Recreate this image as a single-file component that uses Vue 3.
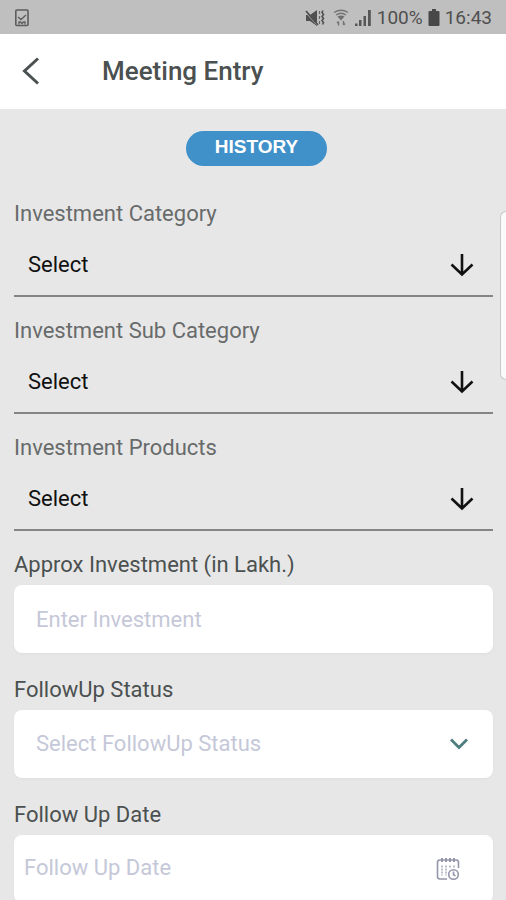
<script setup>
import { ref } from 'vue'

const pickers = ref([
  { id: 'category', label: 'Investment Category', value: '' },
  { id: 'sub-category', label: 'Investment Sub Category', value: '' },
  { id: 'products', label: 'Investment Products', value: '' },
])
const investment = ref('')
const status = ref('')
const followUpDate = ref('')
</script>

<template>
  <div class="screen">
    <div class="status-bar">
      <svg class="device-icon" width="16" height="20" viewBox="0 0 16 20" fill="none" stroke="#5c5c5c" stroke-width="1.6">
        <rect x="1.8" y="2" width="12.2" height="15.5" rx="1" />
        <path d="M4 9l3 2.6 5-4.6M5 16.5v-2.5h1.5l1.5 1.5 1.5-1.5H11v2.5" stroke-width="1.3" />
      </svg>
      <div class="status-right">
        <svg class="mute-icon" width="20" height="20" viewBox="0 0 20 20">
          <path d="M1 7h4l7-5v16l-7-5H1z" fill="#505050" />
          <path d="M1 5l12 13" stroke="#bfbfbf" stroke-width="1" />
          <path d="M1 3l12 14" stroke="#505050" stroke-width="1.8" />
          <path d="M14.5 3v3M14.5 8v3M14.500 13v3" fill="none" stroke="#666" stroke-width="1.2" />
          <path d="M18 2.500l-1 2 1.500 2-1.500 2 1.500 2-1.500 2 1.500 2-1 2" fill="none" stroke="#505050" stroke-width="1.6" />
        </svg>
        <svg class="wifi-icon" width="16" height="20" viewBox="0 0 16 20" fill="none" stroke="#747474" stroke-width="1.4">
          <path d="M1 4.500Q8 0 15 4.500M3 7Q8 3.500 13 7" />
          <path d="M4.500 8.500Q8 6.500 11.500 8.500L8 12.500z" fill="#707070" stroke="none" />
          <path d="M5.500 17.500v-4M4 15l1.500-1.500M10.500 13v4M12 15.500L10.500 17" />
        </svg>
        <svg class="signal-icon" width="18" height="20" viewBox="0 0 18 20" fill="#565656">
          <path d="M1 15.500h2.500V18H1zM5 12h2.500v6H5zM9.500 8h2.500v10H9.500zM14 2h2.800v16H14z" />
        </svg>
        <span>100%</span>
        <svg class="battery-icon" width="12" height="20" viewBox="0 0 12 20" fill="#484848">
          <path d="M4 1h4v2h2.500q1 0 1 1v13q0 1-1 1h-9q-1 0-1-1V4q0-1 1-1H4z" />
        </svg>
        <span>16:43</span>
      </div>
    </div>

    <header class="app-bar">
      <button class="back" type="button" aria-label="Back">
        <svg width="18" height="30" viewBox="0 0 18 30" fill="none" stroke="#4b5050" stroke-width="3">
          <path d="M16 2.500L2.500 15 16 27.500" />
        </svg>
      </button>
      <h1>Meeting Entry</h1>
    </header>

    <main class="content">
      <button class="history" type="button">HISTORY</button>

      <form class="form" @submit.prevent>
        <div class="pickers">
          <div v-for="p in pickers" :key="p.id" class="field">
            <label class="muted" :for="p.id">{{ p.label }}</label>
            <div class="control line">
              <select :id="p.id" v-model="p.value">
                <option value="">Select</option>
              </select>
              <svg class="arrow" width="24" height="24" viewBox="0 0 24 24" fill="none" stroke="#111" stroke-width="2.600">
                <path d="M12 1v20M1.500 11.500L12 21.500l10.500-10" />
              </svg>
            </div>
          </div>
        </div>

        <div class="boxes">
          <div class="field">
            <label for="investment">Approx Investment (in Lakh.)</label>
            <div class="control box">
              <input id="investment" v-model="investment" type="text" placeholder="Enter Investment" />
            </div>
          </div>
          <div class="field">
            <label for="status">FollowUp Status</label>
            <div class="control box">
              <select id="status" v-model="status">
                <option value="">Select FollowUp Status</option>
              </select>
              <svg class="chevron" width="20" height="14" viewBox="0 0 20 14" fill="none" stroke="#4f7d80" stroke-width="2.800">
                <path d="M2 2.500l8 8 8-8" />
              </svg>
            </div>
          </div>
          <div class="field">
            <label for="date">Follow Up Date</label>
            <div class="control box date">
              <input id="date" v-model="followUpDate" type="text" placeholder="Follow Up Date" />
              <svg class="calendar" width="24" height="24" viewBox="0 0 24 24" fill="none" stroke="#9496aa" stroke-width="1.600">
                <path d="M11 22H4q-2.500 0-2.500-2.500v-14Q1.500 3 4 3h16q2.500 0 2.500 2.500V11" />
                <path d="M6 1v4M10 1v4M14 1v4M18 1v4" stroke-width="2" />
                <path d="M6 8.500v10M10 8.500v10M14 8.500v3M18 8.500v2" stroke-width="2" stroke-dasharray="2 1" opacity=".6" />
                <circle cx="17.500" cy="17.500" r="4.800" />
                <path d="M17.500 14.500v3.200l2 1" />
              </svg>
            </div>
          </div>
        </div>
      </form>
    </main>

    <div class="edge-handle"></div>
  </div>
</template>

<style>
html {
  scrollbar-width: none;
}
body {
  margin: 0;
  background: #e7e7e7;
}
</style>

<style scoped>
.screen {
  position: relative;
  min-height: 100vh;
  background: #e7e7e7;
  color: #4b5050;
  font-family: Roboto, "Liberation Sans", sans-serif;
  font-size: 22px;
  line-height: 24px;
}
svg {
  display: block;
}
button,
input,
select {
  margin: 0;
  padding: 0;
  border: 0;
  background: none;
  font: inherit;
  color: inherit;
}
.status-bar {
  display: flex;
  align-items: center;
  justify-content: space-between;
  height: 34px;
  padding: 2px 14px 0;
  box-sizing: border-box;
  background: #bfbfbf;
  color: #505050;
  font-size: 19px;
}
.status-right {
  display: flex;
  align-items: center;
  gap: 5px;
}
.mute-icon {
  margin-right: 3px;
}
.app-bar {
  display: flex;
  align-items: center;
  gap: 56px;
  height: 75px;
  padding: 0 16px 2px;
  box-sizing: border-box;
  background: #fff;
}
.back {
  display: flex;
  justify-content: center;
  width: 30px;
}
h1 {
  margin: 0;
  font-size: 26px;
  font-weight: 500;
  line-height: 32px;
}
.content {
  display: flex;
  flex-direction: column;
  padding: 22px 13px 24px 14px;
}
.history {
  align-self: center;
  width: 141px;
  height: 35px;
  margin-left: 6px;
  padding-bottom: 3px;
  border-radius: 18px;
  background: #4090c9;
  color: #fff;
  font-family: "Liberation Sans", Arial, sans-serif;
  font-size: 19px;
  font-weight: 700;
}
.form {
  display: flex;
  flex-direction: column;
  gap: 22px;
  margin-top: 36px;
}
.pickers {
  display: flex;
  flex-direction: column;
  gap: 22px;
}
.boxes {
  display: flex;
  flex-direction: column;
  gap: 25px;
}
.field {
  display: flex;
  flex-direction: column;
  gap: 8px;
}
label {
  color: #4b5050;
}
.muted {
  color: #686b6b;
}
.control {
  display: grid;
  align-items: center;
}
.control > * {
  grid-area: 1 / 1;
}
.control > svg {
  justify-self: end;
  pointer-events: none;
}
.control input,
.control select {
  width: 100%;
  height: 100%;
  min-width: 0;
  box-sizing: border-box;
  appearance: none;
  outline: none;
}
.line {
  height: 63px;
  box-sizing: border-box;
  border-bottom: 2px solid #858585;
}
.line select {
  padding: 0 50px 0 14px;
  color: #111;
}
.arrow {
  margin-right: 19px;
}
.box {
  height: 68px;
  border-radius: 8px;
  background: #fff;
  box-shadow: 0 1px 3px rgba(0, 0, 0, 0.04);
  color: #c5c8d8;
}
.box input,
.box select {
  padding: 0 50px 0 22px;
}
.box.date input {
  padding-left: 10px;
  padding-bottom: 4px;
}
.box input::placeholder {
  color: #c5c8d8;
  opacity: 1;
}
.chevron {
  margin-right: 24px;
}
.calendar {
  margin-right: 33px;
}
.edge-handle {
  position: absolute;
  top: 211px;
  right: 0;
  width: 6px;
  height: 169px;
  box-sizing: border-box;
  border: 1px solid #c8c8c8;
  border-right: 0;
  border-radius: 6px 0 0 6px;
  background: #fafafa;
}
</style>
